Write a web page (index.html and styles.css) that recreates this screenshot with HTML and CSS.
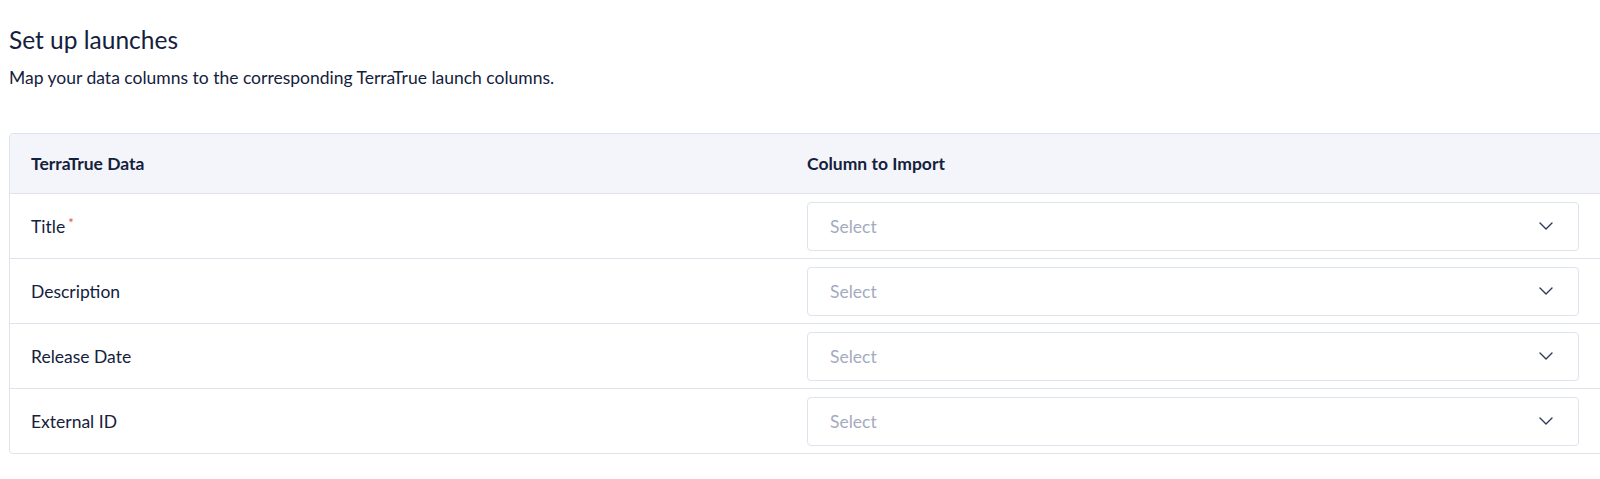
FILE: index.html
```html
<!DOCTYPE html>
<html lang="en">
<head>
  <meta charset="UTF-8" />
  <meta name="viewport" content="width=device-width, initial-scale=1" />
  <title>Set up launches</title>
  <link rel="stylesheet" href="styles.css">
</head>
<body>
  <div class="page">
    <h2>Set up launches</h2>
    <p class="subtitle">Map your data columns to the corresponding TerraTrue launch columns.</p>

    <div class="mapping">
      <div class="mapping-row mapping-head">
        <div class="cell label">TerraTrue Data</div>
        <div class="cell">Column to Import</div>
      </div>

      <div class="mapping-row">
        <div class="cell label">Title<span class="required">*</span></div>
        <div class="cell">
          <div class="select">
            <span class="placeholder">Select</span>
            <svg class="chevron" width="14" height="8" viewBox="0 0 14 8"><path d="M1 1l6 6 6-6" fill="none" stroke="currentColor" stroke-width="1.4" stroke-linecap="round" stroke-linejoin="round"/></svg>
          </div>
        </div>
      </div>

      <div class="mapping-row">
        <div class="cell label">Description</div>
        <div class="cell">
          <div class="select">
            <span class="placeholder">Select</span>
            <svg class="chevron" width="14" height="8" viewBox="0 0 14 8"><path d="M1 1l6 6 6-6" fill="none" stroke="currentColor" stroke-width="1.4" stroke-linecap="round" stroke-linejoin="round"/></svg>
          </div>
        </div>
      </div>

      <div class="mapping-row">
        <div class="cell label">Release Date</div>
        <div class="cell">
          <div class="select">
            <span class="placeholder">Select</span>
            <svg class="chevron" width="14" height="8" viewBox="0 0 14 8"><path d="M1 1l6 6 6-6" fill="none" stroke="currentColor" stroke-width="1.4" stroke-linecap="round" stroke-linejoin="round"/></svg>
          </div>
        </div>
      </div>

      <div class="mapping-row">
        <div class="cell label">External ID</div>
        <div class="cell">
          <div class="select">
            <span class="placeholder">Select</span>
            <svg class="chevron" width="14" height="8" viewBox="0 0 14 8"><path d="M1 1l6 6 6-6" fill="none" stroke="currentColor" stroke-width="1.4" stroke-linecap="round" stroke-linejoin="round"/></svg>
          </div>
        </div>
      </div>
    </div>
  </div>
</body>
</html>
```

FILE: styles.css
```css
html, body {
  margin: 0;
  overflow: hidden;
  background: white;
}
body {
  font-family: Lato, "Open Sans", Arial, sans-serif;
  color: #14213d;
}
.page {
  padding: 25px 0 0 9px;
}
h2 {
  margin: 0;
  font-size: 24.5px;
  font-weight: 400;
  line-height: 1.2;
}
.subtitle {
  margin: 12px 0 0;
  font-size: 17.5px;
  line-height: 24px;
}
.mapping {
  margin-top: 43px;
  width: 1600px;
  border: 1px solid #dfe3eb;
  border-radius: 4px;
}
.mapping-row {
  display: grid;
  grid-template-columns: 780px 1fr;
  height: 64px;
  border-top: 1px solid #dfe3eb;
  font-size: 17.5px;
}
.mapping-head {
  height: 59px;
  border-top: none;
  background: #f4f5fa;
  font-weight: 700;
  border-radius: 4px 4px 0 0;
}
.cell {
  display: flex;
  align-items: center;
  padding: 0 31px 0 17px;
}
.label {
  padding-left: 21px;
}
.required {
  color: #d9534f;
  font-size: 13px;
  margin-left: 3px;
  align-self: flex-start;
  margin-top: 21px;
}
.select {
  flex: 1;
  height: 47px;
  border: 1px solid #dfe3eb;
  border-radius: 4px;
  display: flex;
  align-items: center;
  justify-content: space-between;
  padding: 0 25px 0 22px;
}
.placeholder {
  color: #a3abbd;
}
.chevron {
  color: #2b3a5c;
}
```
